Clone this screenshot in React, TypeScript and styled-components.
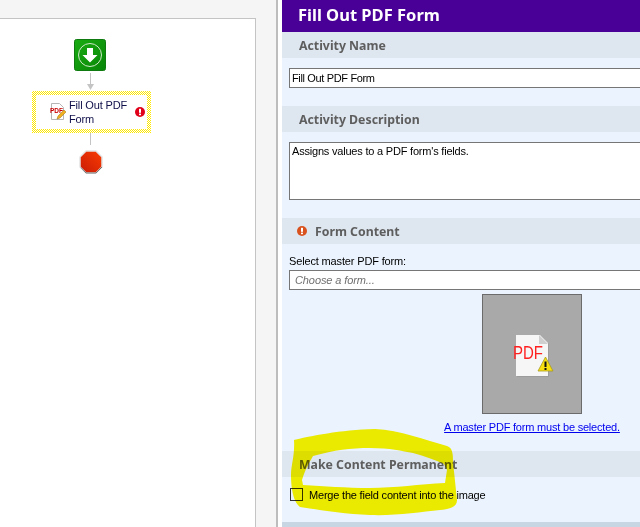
import React from 'react';
import styled, { createGlobalStyle } from 'styled-components';

const GlobalStyle = createGlobalStyle`
    html, body {
        margin: 0;
        padding: 0;
        background: #ffffff;
    }
`;

const Page = styled.div`
    position: relative;
    display: flex;
    width: 640px;
    height: 527px;
    overflow: hidden;
    font-family: 'Liberation Sans', Arial, sans-serif;
    font-size: 11px;
`;

const DesignerPane = styled.div`
    flex: 0 0 278px;
    box-sizing: border-box;
    padding-top: 18px;
    background: #f5f5f5;
    border-right: 2px solid #bdbdbd;
`;

const Canvas = styled.div`
    box-sizing: border-box;
    width: 256px;
    height: 509px;
    padding: 20px 0 0 32px;
    background: #ffffff;
    border-top: 1px solid #c4c4c4;
    border-right: 1px solid #c4c4c4;
`;

const Flow = styled.div`
    display: flex;
    flex-direction: column;
    align-items: center;
    width: 119px;
`;

const FlowStep = styled.div`
    display: flex;
    flex-direction: column;
    align-items: center;
    margin-right: 3px;
`;

const ArrowLine = styled.svg`
    display: block;
    margin: 2px 0 1px;
`;

const Node = styled.div`
    box-sizing: border-box;
    width: 119px;
    height: 42px;
    padding: 4px;
    background: repeating-conic-gradient(#ffe800 0 25%, #ffffff 0 50%) 0 0 / 2px 2px;
`;

const NodeInner = styled.div`
    display: flex;
    align-items: center;
    height: 100%;
    padding-left: 14px;
    background: #ffffff;
    color: #10104a;
    line-height: 14px;
`;

const NodeLabel = styled.div`
    width: 62px;
    margin: 0 4px 0 3px;
    font-size: 11px;
    letter-spacing: -0.15px;
`;

const Gap = styled.div`
    width: 1px;
    height: 12px;
    margin-bottom: 4px;
    background: #c4c4c4;
`;

const Panel = styled.div`
    flex: 0 0 500px;
    margin-left: 4px;
    background: #eaf3fe;
`;

const Title = styled.h1`
    box-sizing: border-box;
    height: 32px;
    margin: 0;
    padding-left: 16px;
    background: #480096;
    color: #ffffff;
    font-family: 'Noto Sans', sans-serif;
    font-size: 16.5px;
    font-weight: 700;
    line-height: 30px;
`;

const SectionHeader = styled.div<{ $indent?: number }>`
    display: flex;
    align-items: center;
    gap: 8px;
    box-sizing: border-box;
    height: 26px;
    padding-left: ${({ $indent }) => $indent ?? 17}px;
    background: #dee6ef;
    color: #5e5e5e;
    font-family: 'Noto Sans', sans-serif;
    font-size: 12.3px;
    font-weight: 700;
`;

const SectionBody = styled.div<{ $height: number; $top?: number }>`
    box-sizing: border-box;
    height: ${({ $height }) => $height}px;
    padding: ${({ $top }) => $top ?? 10}px 7px 0;
`;

const TextField = styled.input<{ $inset?: number }>`
    display: block;
    box-sizing: border-box;
    width: 100%;
    height: 20px;
    margin: 0;
    padding: 0 ${({ $inset }) => $inset ?? 2}px;
    border: 1px solid #767676;
    border-radius: 0;
    outline: none;
    background: #ffffff;
    color: #000000;
    font-family: inherit;
    font-size: 11px;
    letter-spacing: -0.35px;

    &::placeholder {
        color: #707070;
        font-style: italic;
        letter-spacing: -0.1px;
        opacity: 1;
    }
`;

const TextArea = styled.textarea`
    display: block;
    box-sizing: border-box;
    width: 100%;
    height: 58px;
    margin: 0;
    padding: 2px;
    border: 1px solid #767676;
    border-radius: 0;
    outline: none;
    resize: none;
    background: #ffffff;
    color: #000000;
    font-family: inherit;
    font-size: 11px;
    letter-spacing: -0.2px;
`;

const FieldLabel = styled.label`
    display: block;
    height: 17px;
    line-height: 16px;
    color: #000000;
    letter-spacing: -0.15px;
`;

const Preview = styled.div`
    display: flex;
    align-items: center;
    justify-content: center;
    box-sizing: border-box;
    width: 100px;
    height: 120px;
    margin: 4px auto 6px;
    background: #a9a9a9;
    border: 1px solid #6b6b6b;
`;

const WarningLink = styled.a`
    display: block;
    text-align: center;
    color: #0000ee;
    text-decoration: underline;
    line-height: 14px;
    letter-spacing: -0.2px;
`;

const CheckRow = styled.div`
    display: flex;
    align-items: center;
    gap: 6px;
    color: #000000;
    letter-spacing: -0.2px;
`;

const CheckBox = styled.span`
    display: block;
    box-sizing: border-box;
    width: 13px;
    height: 13px;
    margin-left: 1px;
    border: 1px solid #333333;
`;

const Footer = styled.div`
    height: 5px;
    background: #c8d6e4;
`;

const Scribble = styled.svg`
    position: absolute;
    left: 0;
    top: 0;
    mix-blend-mode: multiply;
    pointer-events: none;
`;

const StartIcon = () => (
    <svg width="32" height="32" viewBox="0 0 32 32">
        <defs>
            <linearGradient id="startFill" x1="0" y1="0" x2="1" y2="1">
                <stop offset="0" stopColor="#1aac12" />
                <stop offset="1" stopColor="#078507" />
            </linearGradient>
        </defs>
        <rect x="0.5" y="0.5" width="31" height="31" rx="2" fill="url(#startFill)" stroke="#0f7a0f" />
        <circle cx="16" cy="16" r="11.5" fill="none" stroke="#cfe8c8" strokeWidth="1" />
        <path d="M13 9h6v7h4.500L16 23.500 8.500 16H13z" fill="#ffffff" />
    </svg>
);

const StopIcon = () => (
    <svg width="26" height="26" viewBox="-1 0 26 26">
        <defs>
            <linearGradient id="stopFill" x1="0" y1="1" x2="1" y2="0">
                <stop offset="0" stopColor="#c81a08" />
                <stop offset="1" stopColor="#fa3c00" />
            </linearGradient>
        </defs>
        <path d="M8 2h10l6 6v10l-6 6H8l-6-6V8z" fill="url(#stopFill)" stroke="#e4e4e4" strokeWidth="1.500" />
        <path d="M3 18.500l5 5.500h10l6-6" fill="none" stroke="#777777" strokeWidth="1" />
    </svg>
);

const PdfFormIcon = () => (
    <svg width="16" height="18" viewBox="0 0 16 18">
        <path d="M1.500 0.500h8l4 4v12h-12z" fill="#ffffff" stroke="#b5b5b5" />
        <text x="0" y="9.500" fill="#c80000" fontFamily="'Liberation Sans', sans-serif" fontSize="6.500" fontWeight="700">
            PDF
        </text>
        <path d="M7 16l1-3 6-6 2 2-6 6z" fill="#f0b020" stroke="#9a7010" strokeWidth="0.500" />
    </svg>
);

const ErrorDot = ({ size, fill }: { size: number; fill: string }) => (
    <svg width={size} height={size} viewBox="0 0 10 10">
        <circle cx="5" cy="5" r="5" fill={fill} />
        <rect x="4" y="1.800" width="2" height="4" fill="#ffffff" />
        <rect x="4" y="6.600" width="2" height="1.600" fill="#ffffff" />
    </svg>
);

const MissingPdfIcon = () => (
    <svg width="44" height="46" viewBox="0 0 44 46" style={{ marginTop: 6, marginLeft: 4 }}>
        <path d="M4 1h24l8 8v33H4z" fill="#8f8f8f" opacity="0.500" transform="translate(1 1)" />
        <path d="M4 1h24l8 8v33H4z" fill="#f6f6f6" />
        <path d="M27 1v9h9z" fill="#cfcfcf" />
        <text
            x="1"
            y="25"
            fill="#ff2020"
            fontFamily="'Liberation Sans', sans-serif"
            fontSize="18"
            textLength="30"
            lengthAdjust="spacingAndGlyphs"
        >
            PDF
        </text>
        <path d="M33.500 23l7.500 14H26z" fill="#f8e010" stroke="#a89a20" strokeWidth="0.800" />
        <rect x="32.500" y="27.500" width="2" height="5.500" fill="#111111" />
        <rect x="32.500" y="34" width="2" height="2" fill="#111111" />
    </svg>
);

export default function App() {
    return (
        <>
            <GlobalStyle />
            <Page>
                <DesignerPane>
                    <Canvas>
                        <Flow>
                            <FlowStep>
                                <StartIcon />
                                <ArrowLine width="7" height="17" viewBox="0 0 7 17">
                                    <rect x="3" y="0" width="1" height="12" fill="#c4c4c4" />
                                    <path d="M0 11h7l-3.500 6z" fill="#c4c4c4" />
                                </ArrowLine>
                            </FlowStep>
                            <Node>
                                <NodeInner>
                                    <PdfFormIcon />
                                    <NodeLabel>Fill Out PDF Form</NodeLabel>
                                    <ErrorDot size={10} fill="#e0001a" />
                                </NodeInner>
                            </Node>
                            <FlowStep>
                                <Gap />
                                <StopIcon />
                            </FlowStep>
                        </Flow>
                    </Canvas>
                </DesignerPane>
                <Panel>
                    <Title>Fill Out PDF Form</Title>
                    <SectionHeader>Activity Name</SectionHeader>
                    <SectionBody $height={48}>
                        <TextField readOnly defaultValue="Fill Out PDF Form" />
                    </SectionBody>
                    <SectionHeader>Activity Description</SectionHeader>
                    <SectionBody $height={86}>
                        <TextArea readOnly defaultValue="Assigns values to a PDF form's fields." />
                    </SectionBody>
                    <SectionHeader $indent={15}>
                        <ErrorDot size={10} fill="#d9521e" />
                        Form Content
                    </SectionHeader>
                    <SectionBody $height={207} $top={9}>
                        <FieldLabel>Select master PDF form:</FieldLabel>
                        <TextField readOnly placeholder="Choose a form..." $inset={5} />
                        <Preview>
                            <MissingPdfIcon />
                        </Preview>
                        <WarningLink href="#">A master PDF form must be selected.</WarningLink>
                    </SectionBody>
                    <SectionHeader>Make Content Permanent</SectionHeader>
                    <SectionBody $height={45} $top={11}>
                        <CheckRow>
                            <CheckBox />
                            Merge the field content into the image
                        </CheckRow>
                    </SectionBody>
                    <Footer />
                </Panel>
                <Scribble width="640" height="527" viewBox="0 0 640 527">
                    <path
                        fillRule="evenodd"
                        fill="#fff500"
                        d="M294 440C310 436 340 430 375 429C400 430 425 440 447 446C453 448 453 455 453 462L457 500C457 507 450 509 440 510C420 512 395 516 370 515C345 514 320 510 300 507C294 503 291 490 291 475C291 465 295 455 294 440ZM313 456C335 450 350 448 370 448C390 448 402 451 413 453C425 456 435 460 444 464L447 470L445 483C420 484 395 488 370 488C345 488 325 486 303 485L302 480C305 470 309 463 313 456Z"
                    />
                </Scribble>
            </Page>
        </>
    );
}
